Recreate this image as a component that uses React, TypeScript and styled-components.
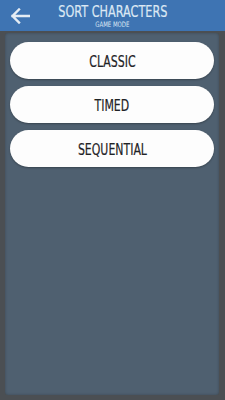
import React from "react";
import styled, { createGlobalStyle } from "styled-components";

const Global = createGlobalStyle`
  html, body {
    margin: 0;
    padding: 0;
    background: #4b4f53;
  }
  #root {
    width: 225px;
    height: 400px;
  }
`;

const FONT = `"Liberation Sans Narrow", "DejaVu Sans Condensed", "Liberation Sans", sans-serif`;

const Screen = styled.div`
  width: 225px;
  height: 400px;
  display: flex;
  flex-direction: column;
  background: #4b4f53;
  font-family: ${FONT};
`;

const Header = styled.div`
  height: 31px;
  flex: none;
  display: flex;
  align-items: center;
  background: #3e74b3;
  position: relative;
`;

const BackButton = styled.div`
  width: 40px;
  height: 31px;
  display: flex;
  align-items: center;
  justify-content: center;
  color: #e4ecf4;
`;

const Titles = styled.div`
  position: absolute;
  left: 0;
  right: 0;
  top: 2px;
  display: flex;
  flex-direction: column;
  align-items: center;
  color: #dce8f4;
  pointer-events: none;
`;

const Title = styled.div`
  font-size: 16.5px;
  line-height: normal;
  transform: scaleX(0.76);
  -webkit-text-stroke: 0.2px #dce8f4;
`;

const Subtitle = styled.div`
  font-size: 7.5px;
  line-height: normal;
  margin-top: -1px;
  transform: scaleX(0.8);
`;

const Panel = styled.div`
  flex: 1;
  margin: 2px 6px 5px 5px;
  background: #4f6070;
  border-radius: 3px;
  box-shadow: inset 0 0 3px rgba(0, 0, 0, 0.25);
  padding: 9px 5px;
  display: flex;
  flex-direction: column;
  gap: 7px;
`;

const ModeButton = styled.div`
  height: 37px;
  border-radius: 19px;
  background: #fdfdfd;
  display: flex;
  align-items: center;
  justify-content: center;
  color: #1f2326;
  font-size: 16px;
  padding-top: 2px;
  box-sizing: border-box;
  box-shadow: 0 1px 2px rgba(0, 0, 0, 0.3);

  span {
    display: inline-block;
    transform: scaleX(0.76);
    -webkit-text-stroke: 0.2px #1f2326;
  }
`;

const modes = ["CLASSIC", "TIMED", "SEQUENTIAL"];

export default function App() {
  return (
    <>
      <Global />
      <Screen>
        <Header>
          <BackButton>
            <svg width="20" height="16" viewBox="0 0 20 16" fill="none">
              <path
                d="M19 8H2.5M9 1.5L2.5 8L9 14.5"
                stroke="currentColor"
                strokeWidth="2.4"
                strokeLinecap="square"
              />
            </svg>
          </BackButton>
          <Titles>
            <Title>SORT CHARACTERS</Title>
            <Subtitle>GAME MODE</Subtitle>
          </Titles>
        </Header>
        <Panel>
          {modes.map(m => (
            <ModeButton key={m}>
              <span>{m}</span>
            </ModeButton>
          ))}
        </Panel>
      </Screen>
    </>
  );
}
